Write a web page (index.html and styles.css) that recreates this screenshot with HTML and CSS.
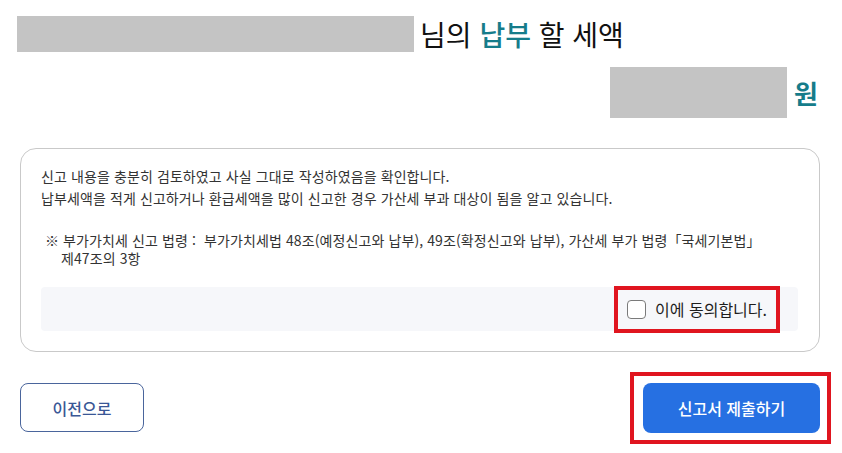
FILE: index.html
```html
<!DOCTYPE html>
<html lang="ko">
<head>
<meta charset="utf-8">
<title>납부 할 세액</title>
<link rel="stylesheet" href="styles.css">
</head>
<body>
<main class="page">
  <div class="title-row">
    <span class="mask mask-name"></span>
    <h1 class="title-text">님의 <span class="accent">납부</span> 할 세액</h1>
  </div>
  <div class="amount-row">
    <span class="mask mask-amount"></span>
    <span class="won">원</span>
  </div>
  <section class="card">
    <p class="confirm">신고 내용을 충분히 검토하였고 사실 그대로 작성하였음을 확인합니다.<br>납부세액을 적게 신고하거나 환급세액을 많이 신고한 경우 가산세 부과 대상이 됨을 알고 있습니다.</p>
    <p class="note">※ 부가가치세 신고 법령 :&nbsp; 부가가치세법 48조(예정신고와 납부), 49조(확정신고와 납부), 가산세 부가 법령「국세기본법」<br>제47조의 3항</p>
    <div class="agree-band">
      <label class="agree">
        <input type="checkbox" class="agree-check">
        <span class="agree-text">이에 동의합니다.</span>
      </label>
    </div>
  </section>
  <div class="actions">
    <button class="btn btn-prev" type="button">이전으로</button>
    <div class="submit-frame">
      <button class="btn btn-submit" type="button">신고서 제출하기</button>
    </div>
  </div>
</main>
</body>
</html>
```

FILE: styles.css
```css
* { box-sizing: border-box; }

body {
  margin: 0;
  background: #ffffff;
  font-family: "Noto Sans CJK KR", "Noto Sans", sans-serif;
  color: #222222;
}

.page {
  padding: 16px 22px 0 20px;
}

.title-row {
  display: flex;
  align-items: center;
  gap: 6px;
  height: 36px;
  margin-left: -3px;
}

.mask {
  display: block;
  background: #c4c4c4;
}

.mask-name {
  width: 397px;
  height: 36px;
}

.title-text {
  margin: 0;
  font-size: 28px;
  font-weight: 400;
  line-height: 36px;
  letter-spacing: 0;
  color: #111111;
}

.accent {
  color: #167c8a;
  font-weight: 500;
}

.amount-row {
  display: flex;
  justify-content: flex-end;
  align-items: center;
  gap: 7px;
  margin-top: 15px;
  padding-right: 2px;
}

.mask-amount {
  width: 177px;
  height: 51px;
}

.won {
  font-size: 26px;
  font-weight: 700;
  color: #167c8a;
  line-height: 30px;
}

.card {
  margin-top: 30px;
  border: 1px solid #c9c9c9;
  border-radius: 16px;
  padding: 16px 21px 20px 20px;
}

.confirm {
  margin: 0;
  font-size: 14px;
  line-height: 22px;
  letter-spacing: 0.1px;
  color: #333333;
}

.note {
  margin: 22px 0 0;
  padding-left: 20px;
  text-indent: -16px;
  font-size: 14px;
  line-height: 18px;
  letter-spacing: 0.1px;
  color: #333333;
}

.agree-band {
  margin-top: 20px;
  height: 44px;
  background: #f6f7fa;
  border-radius: 4px;
  display: flex;
  justify-content: flex-end;
  align-items: center;
  padding-right: 22px;
}

.agree {
  display: inline-flex;
  align-items: center;
  gap: 9px;
  height: 39px;
  padding: 0 9px;
  outline: 4px solid #e0151f;
  cursor: pointer;
}

.agree-check {
  appearance: none;
  -webkit-appearance: none;
  margin: 0;
  width: 19px;
  height: 19px;
  border: 1px solid #7a7a7a;
  border-radius: 4px;
  background: #ffffff;
}

.agree-text {
  font-size: 16px;
  color: #1e1e1e;
  line-height: 20px;
}

.actions {
  display: flex;
  justify-content: space-between;
  align-items: flex-start;
  margin-top: 31px;
}

.btn {
  font-family: "Noto Sans CJK KR", "Noto Sans", sans-serif;
  font-size: 16px;
  font-weight: 500;
  border-radius: 8px;
  cursor: pointer;
}

.btn-prev {
  width: 124px;
  height: 49px;
  border: 1px solid #4a659c;
  background: #ffffff;
  color: #3a5796;
  font-size: 16px;
}

.submit-frame {
  margin: -11px -11px 0 0;
  padding: 7px 7px 7px 9px;
  border: 4px solid #e0151f;
}

.btn-submit {
  display: block;
  width: 177px;
  height: 50px;
  border: none;
  background: #2670e2;
  color: #ffffff;
}
```
